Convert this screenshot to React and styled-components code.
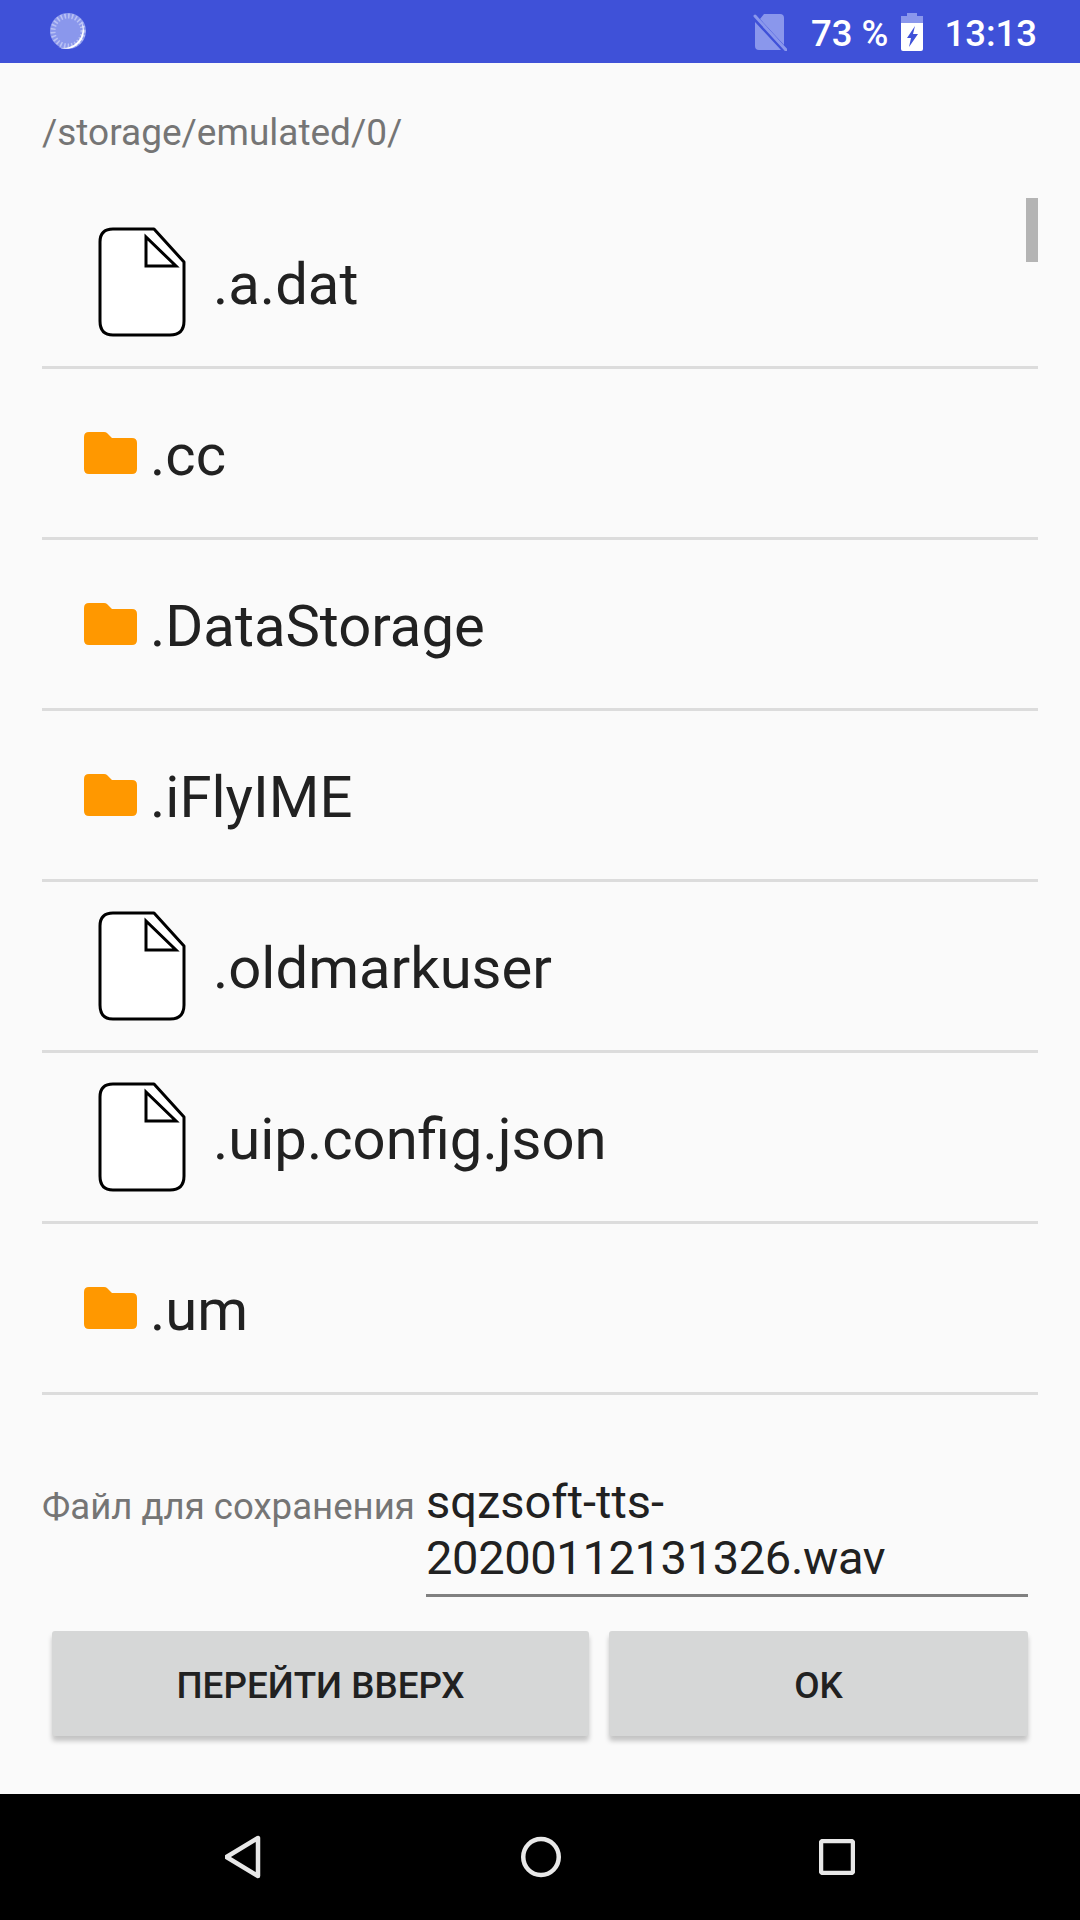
import React from "react"
import styled, { createGlobalStyle } from "styled-components"

const GlobalStyle = createGlobalStyle`
  html, body {
    margin: 0;
    padding: 0;
    background: #fafafa;
  }
  body {
    font-family: Roboto, "Liberation Sans", sans-serif;
  }
`

const Screen = styled.div`
  width: 1080px;
  height: 1920px;
  display: flex;
  flex-direction: column;
  background: #fafafa;
  overflow: hidden;
`

const StatusBar = styled.header`
  height: 63px;
  flex: none;
  display: flex;
  align-items: center;
  padding: 0 43px 0 49px;
  background: #3f51d8;
  color: #fff;
`

const StatusRight = styled.div`
  margin-left: auto;
  display: flex;
  align-items: center;
`

const StatusText = styled.span`
  font-size: 36.5px;
  font-weight: 500;
  line-height: 63px;
  padding-top: 4px;
  margin-left: ${props => props.$gap}px;
`

const BatteryWrap = styled.span`
  display: flex;
  margin-left: 13px;
`

const Main = styled.main`
  flex: 1;
  display: flex;
  flex-direction: column;
  padding: 0 42px;
`

const PathLabel = styled.div`
  height: 135px;
  padding-top: 49px;
  box-sizing: border-box;
  font-size: 37px;
  line-height: 42px;
  color: #757575;
`

const List = styled.div`
  position: relative;
  display: flex;
  flex-direction: column;
`

const ScrollThumb = styled.div`
  position: absolute;
  top: 0;
  right: 0;
  width: 12px;
  height: 64px;
  background: #b4b4b4;
`

const Row = styled.div`
  height: 168px;
  flex: none;
  display: flex;
  align-items: center;
  border-bottom: 3px solid #dcdcdc;
  padding-left: ${props => (props.$folder ? 42 : 56)}px;
`

const RowName = styled.span`
  font-size: 58px;
  line-height: 63px;
  color: #212121;
  margin-left: ${props => (props.$folder ? 13 : 27)}px;
  padding-top: 4px;
`

const SaveRow = styled.div`
  display: flex;
  margin-top: 79px;
`

const SaveLabel = styled.label`
  width: 384px;
  flex: none;
  padding-top: 12px;
  font-size: 36.6px;
  line-height: 42px;
  color: #757575;
  white-space: nowrap;
`

const SaveInput = styled.div`
  width: 602px;
  height: 120px;
  font-size: 47px;
  line-height: 56px;
  color: #212121;
  border-bottom: 3px solid #808080;
  padding-top: 3px;
  margin-top: -3px;
`

const FileStamp = styled.span`
  letter-spacing: -0.35px;
`

const Buttons = styled.div`
  display: flex;
  gap: 20px;
  margin-top: 34px;
  padding: 0 10px;
`

const Button = styled.button`
  flex: ${props => props.$grow};
  height: 105px;
  border: none;
  border-radius: 3px;
  padding: 4px 0 0;
  background: #d6d7d7;
  box-shadow: 0 5px 5px rgba(0, 0, 0, 0.22);
  font-family: Roboto, "Liberation Sans", sans-serif;
  font-size: 36.8px;
  font-weight: 500;
  color: #212121;
`

const NavBar = styled.nav`
  height: 126px;
  flex: none;
  display: flex;
  align-items: center;
  justify-content: center;
  gap: 258px;
  background: #000;
`

const Spinner = () => (
  <svg width="40" height="40" viewBox="0 0 40 40">
    <circle cx="19" cy="19" r="18" fill="#8a97ec" />
    <circle cx="19" cy="19" r="15" fill="none" stroke="#b9c1f4" strokeWidth="5" strokeDasharray="1.6 2.1" />
    <path d="M32 9 A18 18 0 0 1 9 35 A19 19 0 0 0 32 9 Z" fill="#fff" />
  </svg>
)

const NoSimIcon = () => (
  <svg width="34" height="38" viewBox="0 0 34 38">
    <path d="M11 1 H27 Q31 1 31 5 V32 L7 6 Z M2 9 L28 37 H6 Q2 37 2 33 Z" fill="#8a97ec" />
    <path d="M2 3 L33 37" stroke="#8a97ec" strokeWidth="3" strokeLinecap="round" />
  </svg>
)

const BatteryIcon = () => (
  <svg width="22" height="38" viewBox="0 0 22 38">
    <path d="M6 0 H16 V3 H22 V10 H0 V3 H6 Z" fill="#8a97ec" />
    <path d="M0 10 H22 V36 Q22 38 20 38 H2 Q0 38 0 36 Z" fill="#fff" />
    <path d="M14 13 L6 25 H10 L8 34 L17 21 H12 Z" fill="#3f51d8" />
  </svg>
)

const FileIcon = () => (
  <svg width="88" height="110" viewBox="0 0 88 110">
    <path
      d="M15 2 H56 L86 35 V94 Q86 108 72 108 H15 Q2 108 2 94 V15 Q2 2 15 2 Z"
      fill="#fff"
      stroke="#000"
      strokeWidth="3"
      strokeLinejoin="round"
    />
    <path d="M48 10 V39 H78 Z" fill="none" stroke="#000" strokeWidth="3" />
  </svg>
)

const FolderIcon = () => (
  <svg width="53" height="42" viewBox="0 0 53 42">
    <path
      d="M5 0 H20 Q22 0 23 1 L28 6 H48 Q53 6 53 11 V37 Q53 42 48 42 H5 Q0 42 0 37 V5 Q0 0 5 0 Z"
      fill="#ff9800"
    />
  </svg>
)

const BackIcon = () => (
  <svg width="38" height="44" viewBox="0 0 38 44">
    <path d="M33 3 V41 L1.5 22 Z" fill="none" stroke="#e8e8e8" strokeWidth="4.5" strokeLinejoin="round" />
  </svg>
)

const HomeIcon = () => (
  <svg width="40" height="42" viewBox="0 0 40 42">
    <ellipse cx="20" cy="21" rx="17.75" ry="18" fill="none" stroke="#e8e8e8" strokeWidth="4.5" />
  </svg>
)

const RecentIcon = () => (
  <svg width="36" height="36" viewBox="0 0 36 36">
    <rect x="2" y="2" width="32" height="32" rx="2" fill="none" stroke="#e8e8e8" strokeWidth="4.5" />
  </svg>
)

const entries = [
  { name: ".a.dat" },
  { name: ".cc", folder: true },
  { name: ".DataStorage", folder: true },
  { name: ".iFlyIME", folder: true },
  { name: ".oldmarkuser" },
  { name: ".uip.config.json" },
  { name: ".um", folder: true },
]

const App = () => (
  <Screen>
    <GlobalStyle />
    <StatusBar>
      <Spinner />
      <StatusRight>
        <NoSimIcon />
        <StatusText $gap={24}>73 %</StatusText>
        <BatteryWrap>
          <BatteryIcon />
        </BatteryWrap>
        <StatusText $gap={21}>13:13</StatusText>
      </StatusRight>
    </StatusBar>
    <Main>
      <PathLabel>/storage/emulated/0/</PathLabel>
      <List>
        <ScrollThumb />
        {entries.map(entry => (
          <Row key={entry.name} $folder={entry.folder}>
            {entry.folder ? <FolderIcon /> : <FileIcon />}
            <RowName $folder={entry.folder}>{entry.name}</RowName>
          </Row>
        ))}
      </List>
      <SaveRow>
        <SaveLabel>Файл для сохранения</SaveLabel>
        <SaveInput>
          sqzsoft-tts-
          <br />
          <FileStamp>20200112131326.wav</FileStamp>
        </SaveInput>
      </SaveRow>
      <Buttons>
        <Button $grow={537}>ПЕРЕЙТИ ВВЕРХ</Button>
        <Button $grow={419}>OK</Button>
      </Buttons>
    </Main>
    <NavBar>
      <BackIcon />
      <HomeIcon />
      <RecentIcon />
    </NavBar>
  </Screen>
)

export default App
